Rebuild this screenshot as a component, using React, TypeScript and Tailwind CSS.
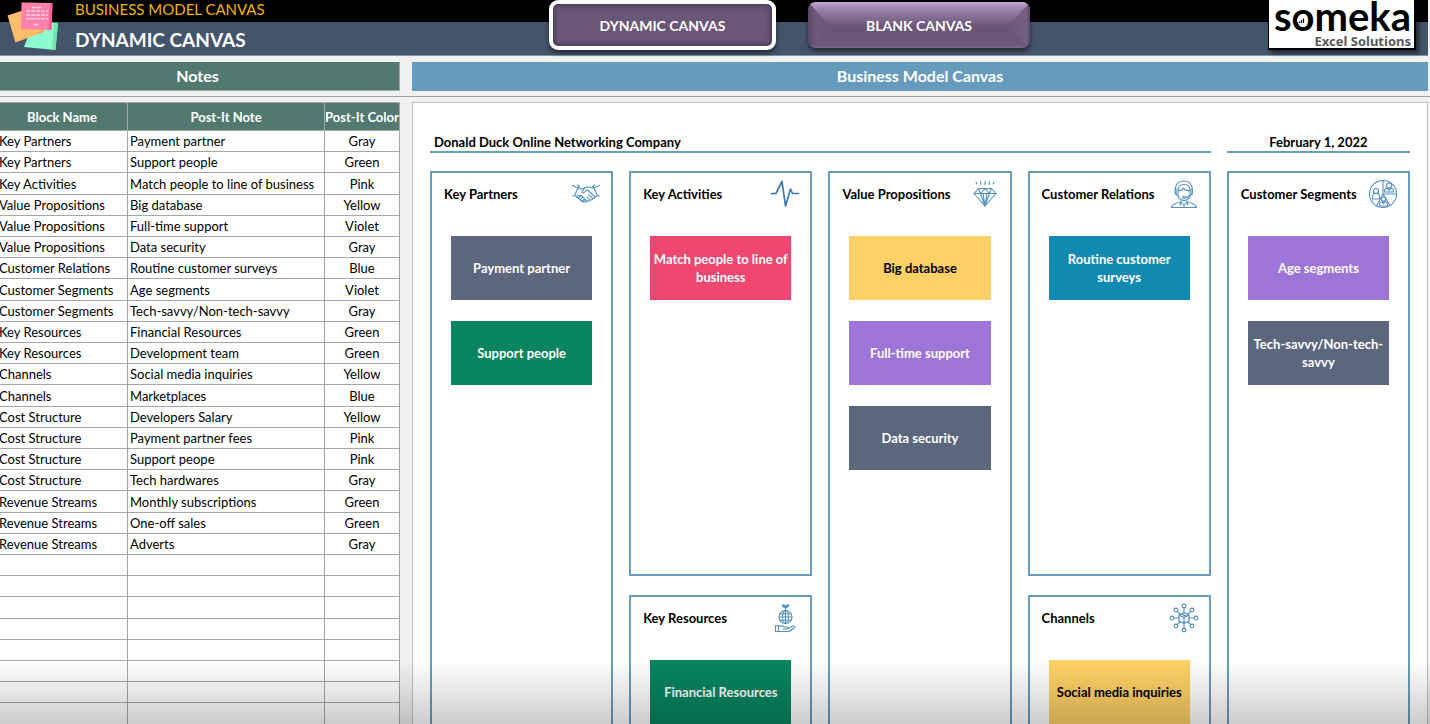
import type { ReactNode } from "react";

type PostItColor = "Gray" | "Green" | "Pink" | "Yellow" | "Violet" | "Blue";

interface Note {
  block: string;
  text: string;
  color: PostItColor;
}

const notes: Note[] = [
  { block: "Key Partners", text: "Payment partner", color: "Gray" },
  { block: "Key Partners", text: "Support people", color: "Green" },
  { block: "Key Activities", text: "Match people to line of business", color: "Pink" },
  { block: "Value Propositions", text: "Big database", color: "Yellow" },
  { block: "Value Propositions", text: "Full-time support", color: "Violet" },
  { block: "Value Propositions", text: "Data security", color: "Gray" },
  { block: "Customer Relations", text: "Routine customer surveys", color: "Blue" },
  { block: "Customer Segments", text: "Age segments", color: "Violet" },
  { block: "Customer Segments", text: "Tech-savvy/Non-tech-savvy", color: "Gray" },
  { block: "Key Resources", text: "Financial Resources", color: "Green" },
  { block: "Key Resources", text: "Development team", color: "Green" },
  { block: "Channels", text: "Social media inquiries", color: "Yellow" },
  { block: "Channels", text: "Marketplaces", color: "Blue" },
  { block: "Cost Structure", text: "Developers Salary", color: "Yellow" },
  { block: "Cost Structure", text: "Payment partner fees", color: "Pink" },
  { block: "Cost Structure", text: "Support peope", color: "Pink" },
  { block: "Cost Structure", text: "Tech hardwares", color: "Gray" },
  { block: "Revenue Streams", text: "Monthly subscriptions", color: "Green" },
  { block: "Revenue Streams", text: "One-off sales", color: "Green" },
  { block: "Revenue Streams", text: "Adverts", color: "Gray" },
];

const EMPTY_ROWS = 8;

const postItStyles: Record<PostItColor, string> = {
  Gray: "bg-[#5c667d] text-white",
  Green: "bg-[#06855f] text-white",
  Pink: "bg-[#f04770] text-white",
  Yellow: "bg-[#ffd166] text-black",
  Violet: "bg-[#9d74d8] text-white",
  Blue: "bg-[#118ab2] text-white",
};

function Icon({ children }: { children: ReactNode }) {
  return (
    <svg
      viewBox="0 0 30 30"
      className="h-[30px] w-[30px] shrink-0"
      fill="none"
      stroke="#5590bd"
      strokeWidth="1.1"
      strokeLinecap="round"
      strokeLinejoin="round"
      aria-hidden="true"
    >
      {children}
    </svg>
  );
}

const HandshakeIcon = () => (
  <Icon>
    <path d="M1.500 6.500 4 7.500l3 1.500 1.500-1.500L6.500 6M28.500 6.500 26 7.500l-3 1.500-1.500-1.500L23.500 6" />
    <path d="M7 9 3.500 16.500 1.500 17M23 9l3.500 7.500 2 .5M3.500 16.500 6 18M26.500 16.500 24 18" />
    <path d="M7.500 9.500c2.500.8 4 .6 6-.5l2-1c2.500-.6 4.500 1 7 1" />
    <path d="m13.500 9-2.500 4c1.500 1.200 3 .4 4-1.500l1.500-.5 7 6.500c.8 1.500-.8 2.500-2 1.700L18 16" />
    <path d="M21.500 19.200c.2 1.600-1.300 2.300-2.600 1.500L16 18.200M18.900 20.700c-.2 1.600-1.600 2-2.700 1.200L14.200 20.500M16.200 21.900c-.7 1.400-2 1.300-3 .5" />
    <path d="M6 18c.5-1.700 2-2 3-.8 1-1.200 2.700-.6 2.500 1 1.500-.2 2.200 1 1.500 2.100 1.200.3 1.300 1.800.2 2.400-1 .5-2 0-2.700-.7L6 18Z" />
    <path d="m9 17.200-1.500 2M11.500 18.200l-2 2.300M13 20.300l-1.600 1.700" />
  </Icon>
);

const PulseIcon = () => (
  <Icon>
    <path d="M1.500 14.500H6L12 2.500 15.500 27 20.500 10 22.500 14.500H28.500" stroke="#3c76ac" strokeWidth="1.700" />
  </Icon>
);

const DiamondIcon = () => (
  <Icon>
    <path d="M8.500 9.500h13l4.500 5L15 27 4 14.500l4.500-5Z" />
    <path d="M4 14.500h22M8.500 9.500l2 5L15 27l4.500-12.500 2-5M10.500 14.500 15 9.500l4.500 5M13 14.500 15 27l2-12.500" />
    <path d="m6 3 1 2M10.500 2.500l.5 3M15 2.500v3M19.500 2.500l-.5 3M24 3l-1 2" />
  </Icon>
);

const AgentIcon = () => (
  <Icon>
    <path d="M9 16.500c-2.500-.5-3-2-3-4C6 5.500 9.500 2 15 2s8.500 3.500 8.500 10.500c0 2-.5 3.500-3 4" />
    <path d="M9 16.500v-5c0-4 2-6 6-6s6 2 6 6v5c0 2.500-2.500 5-6 5s-6-2.500-6-5Z" />
    <path d="M9 11.500c3 .5 4.500-.5 5.500-2.500 1 2 3.500 3 6.500 2.500M7 9.500v6M23 9.500v6M20.500 16.500c-.5 1.500-2 2-4 2" />
    <circle cx="15" cy="18.500" r="1.300" />
    <path d="M12 21v2l3 3.500 3-3.500v-2M12 23c-5 .5-8.500 1.500-9.500 5.500h25c-1-4-4.500-5-9.500-5.500M12 23l-1 3M18 23l1 3M15 26.500v2" />
  </Icon>
);

const SegmentsIcon = () => (
  <Icon>
    <circle cx="15" cy="15" r="13.500" />
    <path d="M15 1.500V15L8.500 27M15 15h13.500M15 15l7 11.500" />
    <circle cx="8" cy="12" r="2.500" />
    <path d="M4.500 20v-2.500c0-2 1.500-3 3.500-3s3.500 1 3.500 3V20h-7ZM5.500 12v2.500M10.500 12v2.500" />
    <circle cx="21" cy="6.500" r="2.500" />
    <path d="M16.500 13v-1.500c0-1.700 1.500-2.500 4.500-2.500s4.500.8 4.500 2.500V13h-9ZM19.500 9.500 21 11.500l1.500-2" />
    <circle cx="15.500" cy="20" r="2.200" />
    <path d="M11.500 27v-1.500c0-2 1.500-3 4-3s4 1 4 3V27h-8ZM14 22.700l1.500 2 1.500-2" />
  </Icon>
);

const ResourcesIcon = () => (
  <Icon>
    <circle cx="15.500" cy="14" r="6.500" />
    <ellipse cx="15.500" cy="14" rx="3" ry="6.500" />
    <path d="M15.500 4v16.500M9 14h13M10 10.700h11M10 17.300h11" />
    <path d="M15.500 4.500c-1.800.2-3.200-.8-3.200-2.700 1.800 0 3.200.9 3.200 2.700ZM15.500 4.500c1.800.2 3.200-.8 3.200-2.700-1.800 0-3.200.9-3.200 2.700Z" fill="#5590bd" />
    <path d="M5.500 22.500h3v6h-3zM8.500 23.500c3-1.500 4.500-.5 6 .5H17c1.500.2 1.500 2 0 2h-4M18 25.200l5-2c1.500-.5 2.800.5 1.500 1.500L19 28.500H8.500" />
  </Icon>
);

const ChannelsIcon = () => (
  <Icon>
    <path d="m15 9.500 5 2.500v6l-5 2.500-5-2.500v-6l5-2.500ZM10 12l5 2.500 5-2.500M15 14.500v6M12.500 10.800l5 2.500" strokeWidth="1.300" />
    <path d="M15 9.500V5M15 20.500V25M10 15H5M20 15h5M11 11 8.300 8.300M19 11l2.700-2.700M11 19l-2.700 2.700M19 19l2.700 2.700" />
    <circle cx="15" cy="3" r="1.900" />
    <circle cx="15" cy="27" r="1.900" />
    <circle cx="3" cy="15" r="1.900" />
    <circle cx="27" cy="15" r="1.900" />
    <circle cx="7" cy="7" r="1.900" />
    <circle cx="23" cy="7" r="1.900" />
    <circle cx="7" cy="23" r="1.900" />
    <circle cx="23" cy="23" r="1.900" />
  </Icon>
);

function PostItLogo() {
  return (
    <svg viewBox="0 0 52 50" className="h-[50px] w-[52px] shrink-0" aria-hidden="true">
      <path d="m27 21 24 2-2.500 27L17 47l10-26Z" fill="#8dfcd0" />
      <path d="m47.500 22.700 3.500.3-2.500 27-3.500-.3 2.500-27Z" fill="#6ee8a4" />
      <path d="M.5 15.500 29 6l8 26-28.500 10.500-8-27Z" fill="#ffbd6b" />
      <path d="m31 34.500 4.500-6 1.500 3.500-6 2.500Z" fill="#f2a44f" />
      <path d="M14.500 2.500 45.500 3 44.500 30 14 29l.5-26.500Z" fill="#ff82ab" />
      <path d="m43 3 2.500 0-1 27-3-.2L43 3Z" fill="#fb5f96" />
      <path
        d="M25 7.500h10M19 11.200h22M19 15h22M19 18.700h22M27 24.500h5"
        stroke="#ffd6e2"
        strokeWidth="1.300"
        strokeDasharray="4 1"
      />
    </svg>
  );
}

function BrandLogo() {
  return (
    <a
      href="#"
      aria-label="someka Excel Solutions"
      className="relative ml-auto mr-3 flex h-[50px] w-[148px] flex-col items-end border-b-2 border-l border-r-2 border-black bg-white pr-[3px] shadow-[3px_3px_4px_rgba(0,0,0,0.5)]"
    >
      <span className="h-[34px] text-[40px] font-bold leading-[32px] text-black">someka</span>
      <span className="font-['Noto_Sans'] text-[13px] font-bold leading-[14px] text-[#595959]">Excel Solutions</span>
      {/* bar chart sitting inside the "o" */}
      <svg viewBox="0 0 10 10" className="absolute left-[28px] top-[15px] h-[10px] w-[10px]" aria-hidden="true">
        <circle cx="5" cy="5" r="5" fill="#fff" />
        <path d="M2.500 8V6.500M4.500 8V5M6.500 8V3.500" stroke="#000" strokeWidth="1.200" />
      </svg>
    </a>
  );
}

function Header() {
  return (
    <header className="mr-[2px] flex h-14 items-start border-b border-[#8490a3] bg-[linear-gradient(#000_22px,#44546a_22px)]">
      <div className="flex w-[549px] shrink-0 items-start pl-[7px]">
        <PostItLogo />
        <div className="flex flex-col pl-4">
          <span className="h-[22px] text-[15px] leading-[18px] text-[#f0b400]">BUSINESS MODEL CANVAS</span>
          <h1 className="text-[19px] font-bold leading-[36px] text-white">DYNAMIC CANVAS</h1>
        </div>
      </div>
      <nav className="flex items-start gap-8">
        <button
          type="button"
          className="h-[50px] w-[227px] rounded-[9px] border-4 border-white bg-[#6a5676] text-[14px] font-bold text-white shadow-[0_3px_5px_rgba(0,0,0,0.5),inset_0_0_4px_2px_#4d3b59]"
        >
          DYNAMIC CANVAS
        </button>
        <button
          type="button"
          className="relative mt-[2px] h-[46px] w-[222px] overflow-hidden rounded-lg bg-[#6b5678] text-[14px] font-bold text-white shadow-[0_3px_4px_rgba(0,0,0,0.5)]"
        >
          {/* bevelled faces */}
          <svg viewBox="0 0 222 46" preserveAspectRatio="none" className="absolute inset-0 h-full w-full" aria-hidden="true">
            <defs>
              <linearGradient id="bevelTop" x1="0" y1="0" x2="0" y2="1">
                <stop offset="0" stopColor="#c3a8d2" />
                <stop offset="0.300" stopColor="#9a82a9" />
                <stop offset="1" stopColor="#6b5678" />
              </linearGradient>
              <linearGradient id="bevelLeft" x1="0" y1="0" x2="1" y2="0">
                <stop offset="0" stopColor="#594665" />
                <stop offset="0.400" stopColor="#6f5a7c" />
                <stop offset="1" stopColor="#6b5678" />
              </linearGradient>
              <linearGradient id="bevelRight" x1="0" y1="0" x2="1" y2="0">
                <stop offset="0" stopColor="#6e587b" />
                <stop offset="0.800" stopColor="#755f82" />
                <stop offset="1" stopColor="#5c4869" />
              </linearGradient>
            </defs>
            <path d="M0 0h222l-20 24H20L0 0Z" fill="url(#bevelTop)" />
            <path d="M0 0l20 22v4L0 46V0Z" fill="url(#bevelLeft)" />
            <path d="M222 0l-20 22v4l20 20V0Z" fill="url(#bevelRight)" />
            <path d="M3 45h216" stroke="#8b6f94" strokeWidth="1.200" />
          </svg>
          <span className="relative">BLANK CANVAS</span>
        </button>
      </nav>
      <BrandLogo />
    </header>
  );
}

const cell = "border border-[#a6a6a6] px-[2px] py-0";

function NotesTable() {
  return (
    <table className="h-[623px] w-full table-fixed border-collapse bg-white text-[13px] leading-[18px] text-black">
      <colgroup>
        <col className="w-[131px]" />
        <col />
        <col className="w-[75px]" />
      </colgroup>
      <thead>
        <tr className="h-[28px] bg-[#51796f] text-white">
          <th className={cell}>Block Name</th>
          <th className={cell}>Post-It Note</th>
          <th className="whitespace-nowrap border border-[#a6a6a6] p-0">Post-It Color</th>
        </tr>
      </thead>
      <tbody>
        {notes.map((note, i) => (
          <tr key={i}>
            <td className={cell}>{note.block}</td>
            <td className={`${cell} whitespace-nowrap`}>{note.text}</td>
            <td className={`${cell} text-center`}>{note.color}</td>
          </tr>
        ))}
        {Array.from({ length: EMPTY_ROWS }, (_, i) => (
          <tr key={`empty-${i}`}>
            <td className={cell} />
            <td className={cell} />
            <td className={cell}>&nbsp;</td>
          </tr>
        ))}
      </tbody>
    </table>
  );
}

interface BlockProps {
  title: string;
  icon: ReactNode;
  tall?: boolean;
}

function Block({ title, icon, tall = false }: BlockProps) {
  return (
    <section className={`border-2 border-[#6a9cbd] ${tall ? "row-span-2" : ""}`}>
      <div className="flex items-center justify-between pl-3 pr-[10px] pt-[6px]">
        <h3 className="whitespace-nowrap text-[13px] font-bold leading-[18px] text-black">{title}</h3>
        {icon}
      </div>
      <ul className="flex flex-col gap-[21px] px-[19px] pt-[27px]">
        {notes
          .filter((note) => note.block === title)
          .map((note) => (
            <li
              key={note.text}
              className={`flex h-16 items-center justify-center text-center text-[13px] font-bold leading-[18px] ${postItStyles[note.color]}`}
            >
              {note.text}
            </li>
          ))}
      </ul>
    </section>
  );
}

function Canvas() {
  return (
    <div className="border border-[#bfbfbf] bg-white px-[17px] pt-[30px]">
      <div className="grid grid-cols-5 gap-4 text-[13px] font-bold leading-[18px] text-black">
        <h2 className="col-span-4 border-b-2 border-[#6a9cbd] pl-1">Donald Duck Online Networking Company</h2>
        <p className="border-b-2 border-[#6a9cbd] text-center">February 1, 2022</p>
      </div>
      <div className="mt-[18px] grid grid-cols-5 grid-rows-[405px_405px] gap-x-4 gap-y-[19px]">
        <Block title="Key Partners" icon={<HandshakeIcon />} tall />
        <Block title="Key Activities" icon={<PulseIcon />} />
        <Block title="Value Propositions" icon={<DiamondIcon />} tall />
        <Block title="Customer Relations" icon={<AgentIcon />} />
        <Block title="Customer Segments" icon={<SegmentsIcon />} tall />
        <Block title="Key Resources" icon={<ResourcesIcon />} />
        <Block title="Channels" icon={<ChannelsIcon />} />
      </div>
    </div>
  );
}

export default function App() {
  return (
    <div className="relative h-screen overflow-hidden bg-[#f1f1f1] font-['Lato',sans-serif]">
      <Header />
      <div className="flex gap-3 border-b border-[#a0a0a0] pb-[5px] pr-[2px] pt-[6px] text-[16px] font-bold leading-[28px] text-white">
        <div className="-ml-1 w-[404px] shrink-0 border-b border-r border-[#a6a6a6] bg-[#51796f] text-center">Notes</div>
        <div className="flex-1 bg-[#679bbc] text-center">Business Model Canvas</div>
      </div>
      <main className="flex items-start gap-3 pr-[2px] pt-[5px]">
        <div className="-ml-1 w-[404px] shrink-0">
          <NotesTable />
        </div>
        <div className="min-w-0 flex-1">
          <Canvas />
        </div>
      </main>
      <div className="pointer-events-none absolute inset-x-0 bottom-0 h-[64px] bg-linear-to-b from-transparent to-black/20" />
    </div>
  );
}
